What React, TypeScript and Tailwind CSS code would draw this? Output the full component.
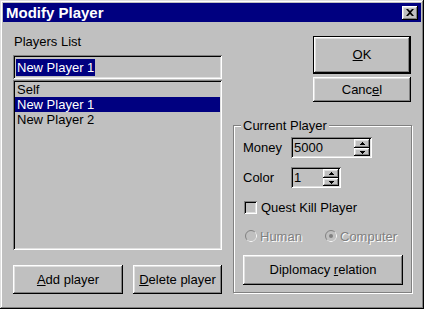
import type { ReactNode } from 'react'

const raised =
  'shadow-[inset_-1px_-1px_#000,inset_1px_1px_#fff,inset_-2px_-2px_#808080,inset_2px_2px_#dfdfdf]'
const sunken =
  'shadow-[inset_1px_1px_#808080,inset_-1px_-1px_#fff,inset_2px_2px_#000,inset_-2px_-2px_#dfdfdf]'

function Btn({ children, className = '' }: { children: ReactNode; className?: string }) {
  return (
    <div className={`flex items-center justify-center bg-[#c0c0c0] ${raised} ${className}`}>
      {children}
    </div>
  )
}

function Spin({ value, w }: { value: string; w: string }) {
  return (
    <div className={`flex h-[21px] ${w} bg-[#c0c0c0] p-[2px] ${sunken}`}>
      <div className="flex-1 pl-[1px] leading-[17px]">{value}</div>
      <div className="flex w-[16px] flex-col">
        <div className={`flex h-[9px] items-center justify-center ${raised}`}>
          <svg width="5" height="3" viewBox="0 0 5 3">
            <path d="M2 0h1v1h1v1h1v1H0V2h1V1h1z" fill="#000" />
          </svg>
        </div>
        <div className={`flex h-[8px] items-center justify-center ${raised}`}>
          <svg width="5" height="3" viewBox="0 0 5 3">
            <path d="M0 0h5v1H4v1H3v1H2V2H1V1H0z" fill="#000" />
          </svg>
        </div>
      </div>
    </div>
  )
}

function Radio({ label, checked }: { label: string; checked?: boolean }) {
  return (
    <div className="flex items-center gap-[3px]">
      <svg width="12" height="12" viewBox="0 0 12 12">
        <circle cx="6" cy="6" r="5.5" fill="#c0c0c0" stroke="#808080" />
        <path d="M2.1 9.9A5.5 5.5 0 0 0 9.9 2.1" stroke="#fff" fill="none" />
        {checked && <circle cx="6" cy="6" r="2" fill="#808080" />}
      </svg>
      <span className="text-[#808080] [text-shadow:1px_1px_#fff]">{label}</span>
    </div>
  )
}

export default function App() {
  return (
    <div
      className={`flex h-[309px] w-[424px] flex-col bg-[#c0c0c0] p-[3px] font-['Liberation_Sans',Arial,sans-serif] text-[13px] text-black shadow-[inset_-1px_-1px_#000,inset_1px_1px_#dfdfdf,inset_-2px_-2px_#808080,inset_2px_2px_#fff]`}
    >
      {/* title bar */}
      <div className="flex h-[19px] items-center justify-between bg-[#000080] pl-[3px] pr-[3px]">
        <span className="text-[15px] font-bold leading-[19px] text-white">Modify Player</span>
        <Btn className="h-[14px] w-[16px]">
          <svg width="8" height="7" viewBox="0 0 8 7">
            <path d="M0 0h2l2 2 2-2h2L5 3.5 8 7H6L4 5 2 7H0l3-3.5z" fill="#000" />
          </svg>
        </Btn>
      </div>

      <div className="flex pl-[10px]">
        {/* left column */}
        <div className="flex w-[209px] flex-col pt-[12px]">
          <div className="ml-[1px] h-[15px] leading-[15px]">Players List</div>
          <div className={`mt-[6px] flex h-[24px] items-center bg-[#c0c0c0] px-[3px] ${sunken}`}>
            <span className="bg-[#000080] px-[1px] leading-[17px] text-white">New Player 1</span>
          </div>
          <div className={`mt-[1px] flex h-[170px] flex-col bg-[#c0c0c0] p-[2px] ${sunken}`}>
            <div className="h-[15px] px-[2px] leading-[15px]">Self</div>
            <div className="h-[15px] bg-[#000080] px-[2px] leading-[15px] text-white">New Player 1</div>
            <div className="h-[15px] px-[2px] leading-[15px]">New Player 2</div>
          </div>
          <div className="mt-[15px] flex gap-[10px]">
            <Btn className="h-[29px] w-[110px]">
              <span>
                <u>A</u>dd player
              </span>
            </Btn>
            <Btn className="h-[29px] w-[89px]">
              <span>
                <u>D</u>elete player
              </span>
            </Btn>
          </div>
        </div>

        {/* right column */}
        <div className="ml-[11px] flex w-[179px] flex-col">
          <div className="mr-[1px] mt-[14px] h-[38px] w-[98px] self-end border border-black">
            <Btn className="h-full w-full">
              <span>
                <u>O</u>K
              </span>
            </Btn>
          </div>
          <Btn className="mr-[1px] mt-[3px] h-[25px] w-[98px] self-end">
            <span>
              Canc<u>e</u>l
            </span>
          </Btn>

          {/* group box */}
          <div className="relative mt-[23px] h-[168px] border border-[#808080] shadow-[1px_1px_#fff,inset_1px_1px_#fff]">
            <span className="absolute left-[7px] top-[-8px] bg-[#c0c0c0] px-[2px] leading-[15px]">
              Current Player
            </span>
            <div className="flex flex-col pl-[9px] pt-[11px]">
              <div className="flex items-center">
                <span className="w-[48px]">Money</span>
                <Spin value="5000" w="w-[81px]" />
              </div>
              <div className="mt-[9px] flex items-center">
                <span className="w-[48px]">Color</span>
                <Spin value="1" w="w-[50px]" />
              </div>
              <div className="mt-[10px] flex items-center gap-[4px]">
                <div className={`ml-[1px] h-[13px] w-[13px] bg-[#c0c0c0] ${sunken}`} />
                <span>Quest Kill Player</span>
              </div>
              <div className="mt-[9px] flex items-center pl-[2px]">
                <div className="w-[80px]">
                  <Radio label="Human" />
                </div>
                <Radio label="Computer" checked />
              </div>
              <Btn className="mt-[9px] h-[30px] w-[160px]">
                <span>
                  Diplomacy <u>r</u>elation
                </span>
              </Btn>
            </div>
          </div>
        </div>
      </div>
    </div>
  )
}
